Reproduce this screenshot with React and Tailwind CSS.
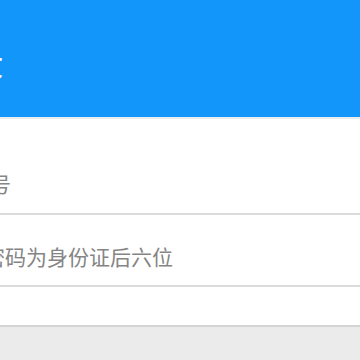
export default function App() {
    return (
        <div className="w-[360px] h-[360px] overflow-hidden bg-[#ebebeb] font-['Noto_Sans_CJK_SC','Noto_Sans',sans-serif]">
            <div className="h-[117px] bg-[#1296fa] flex items-center overflow-hidden">
                <h1 className="ml-[-156px] text-[40px] leading-none text-white whitespace-nowrap">用户登录</h1>
            </div>
            <form className="bg-white border-t-2 border-[#ececec]">
                <div className="h-[96px] pt-[52px] border-b-2 border-[#dcdcdc] overflow-hidden">
                    <input
                        type="text"
                        placeholder="请输入账号"
                        className="block ml-[-94px] w-[460px] h-[24px] p-0 text-[21px] leading-[24px] outline-none placeholder:text-[#858585]"
                    />
                </div>
                <div className="h-[72px] pt-[29px] border-b-2 border-[#dcdcdc] overflow-hidden">
                    <input
                        type="password"
                        placeholder="密码为身份证后六位"
                        className="block ml-[-16px] w-[380px] h-[24px] p-0 text-[21px] leading-[24px] outline-none placeholder:text-[#858585]"
                    />
                </div>
                <div className="h-[40px] border-b-2 border-[#d4d4d4]"></div>
            </form>
        </div>
    );
}
